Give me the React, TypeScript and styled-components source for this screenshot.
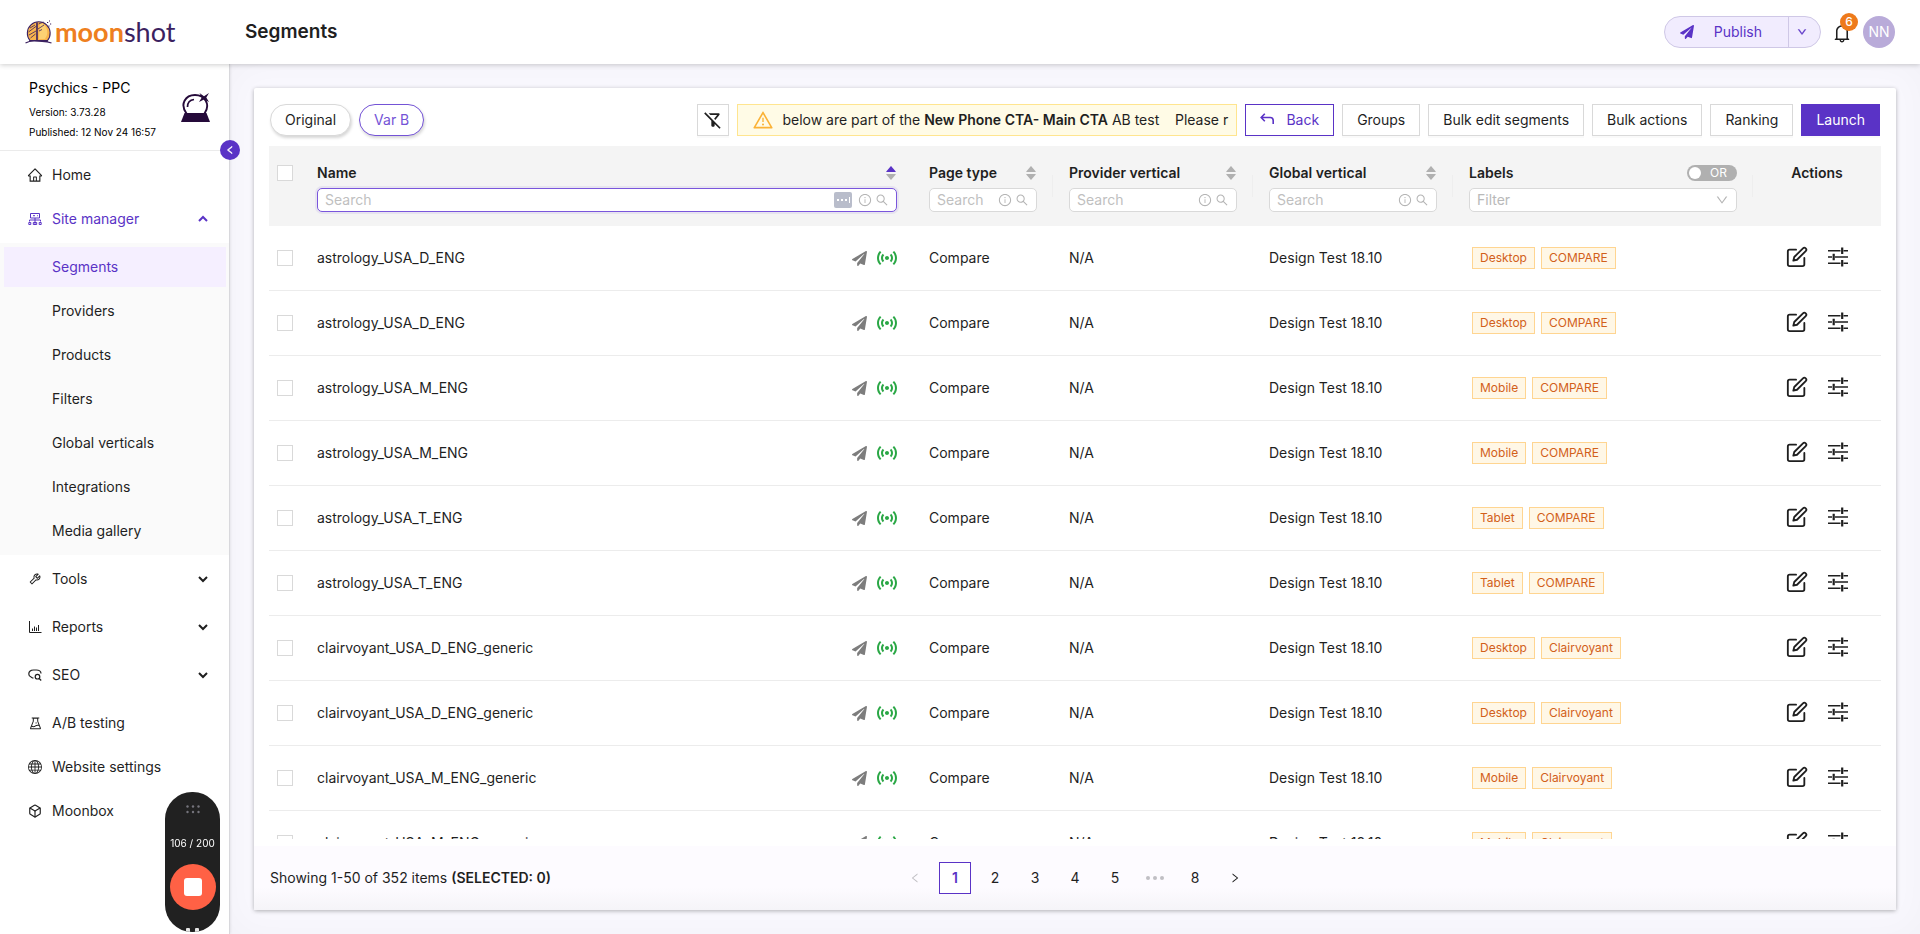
import React from "react";
import styled, { createGlobalStyle, css } from "styled-components";
import {
  AiOutlineBell,
  AiOutlineDown,
  AiOutlineExperiment,
  AiOutlineHome,
  AiOutlineInfoCircle,
  AiOutlineLeft,
  AiOutlineRight,
  AiOutlineSearch,
  AiOutlineTool,
  AiOutlineWarning,
  AiFillCaretDown,
  AiFillCaretUp,
} from "react-icons/ai";
import { BsGlobe } from "react-icons/bs";
import { FaPaperPlane } from "react-icons/fa";
import { FiBox, FiEdit } from "react-icons/fi";
import { MdOutlineFilterAltOff, MdSensors } from "react-icons/md";

const PURPLE = "#5a33c6";
const INK = "#1f1f1f";
const LINE = "#d9d9d9";

const GlobalStyle = createGlobalStyle`
  *, *::before, *::after { box-sizing: border-box; }
  body {
    margin: 0;
    font-family: Inter, "Liberation Sans", sans-serif;
    font-size: 14px;
    line-height: 22px;
    color: ${INK};
    background: #fff;
  }
  button, input, select { font: inherit; color: inherit; margin: 0; }
  button { cursor: pointer; }
  a { color: inherit; text-decoration: none; }
  svg { display: block; flex: none; }
`;

const Page = styled.div`
  display: flex;
  flex-direction: column;
  height: 100vh;
`;

/* ---------- top bar ---------- */

const TopBar = styled.header`
  position: relative;
  z-index: 2;
  display: flex;
  align-items: center;
  flex: none;
  height: 64px;
  padding: 0 25px 0 25px;
  background: #fff;
  box-shadow: 0 1px 5px rgba(0, 0, 0, 0.2);
`;

const Logo = styled.a`
  display: flex;
  align-items: center;
  gap: 3px;
  width: 220px;
`;

const Wordmark = styled.span`
  font-family: Lato, "Open Sans", sans-serif;
  font-size: 27px;
  line-height: 32px;
  font-weight: 700;
  color: #ee7f20;
  span {
    font-weight: 400;
    color: #3b2160;
  }
`;

const PageTitle = styled.h1`
  flex: 1;
  margin: 0;
  font-size: 19px;
  line-height: 28px;
  font-weight: 600;
`;

const PublishGroup = styled.div`
  display: flex;
  height: 32px;
  border: 1px solid #cfc8e6;
  border-radius: 16px;
  background: #f1ecfe;
  color: ${PURPLE};
  overflow: hidden;
`;

const PublishButton = styled.button`
  display: flex;
  align-items: center;
  gap: 20px;
  padding: 0 26px 0 15px;
  border: 0;
  background: none;
`;

const PublishMore = styled.button`
  display: flex;
  align-items: center;
  justify-content: center;
  width: 32px;
  padding: 0 5px 0 0;
  border: 0;
  border-left: 1px solid #cfc8e6;
  background: none;
`;

const BellButton = styled.button`
  position: relative;
  margin: 2px 10px 0;
  padding: 0;
  border: 0;
  background: none;
`;

const BellCount = styled.span`
  position: absolute;
  top: -9px;
  right: -5px;
  width: 18px;
  height: 18px;
  border-radius: 9px;
  background: #ee7a1b;
  color: #fff;
  font-size: 12px;
  line-height: 18px;
  font-weight: 500;
  text-align: center;
`;

const Avatar = styled.button`
  width: 32px;
  height: 32px;
  padding: 0;
  border: 0;
  border-radius: 50%;
  background: #b9abd9;
  color: #fff;
`;

/* ---------- side bar ---------- */

const Body = styled.div`
  display: flex;
  flex: 1;
  min-height: 0;
`;

const Sidebar = styled.aside`
  position: relative;
  z-index: 1;
  flex: none;
  width: 230px;
  background: #fff;
  border-right: 1px solid #d8d8dc;
  box-shadow: 0 0 3px rgba(0, 0, 0, 0.12);
`;

const SiteCard = styled.div`
  display: flex;
  justify-content: space-between;
  padding: 12px 19px 8px 29px;
  border-bottom: 1px solid #ebebeb;
  color: #000;
`;

const SiteName = styled.p`
  margin: 0 0 2px;
  line-height: 24px;
`;

const SiteMeta = styled.p`
  margin: 0;
  font-size: 10px;
  line-height: 20px;
  white-space: nowrap;
`;

const SiteIcon = styled.svg`
  margin-top: 16px;
`;

const CollapseButton = styled.button`
  position: absolute;
  top: 76px;
  right: -11px;
  display: flex;
  align-items: center;
  justify-content: center;
  width: 20px;
  height: 20px;
  padding: 0;
  border: 0;
  border-radius: 50%;
  background: ${PURPLE};
  color: #fff;
`;

const Nav = styled.nav`
  display: flex;
  flex-direction: column;
  padding-top: 4px;
`;

const NavGroup = styled.div<{ $sub?: boolean; $gap?: number; $first?: boolean }>`
  display: flex;
  flex-direction: column;
  gap: ${(p) => p.$gap ?? 4}px;
  padding: ${(p) => (p.$first ? 0 : 4)}px 3px 4px 4px;
  background: ${(p) => (p.$sub ? "#fafafa" : "none")};
`;

const NavItem = styled.a<{ $sub?: boolean; $active?: boolean; $open?: boolean }>`
  display: flex;
  align-items: center;
  gap: 10px;
  height: 40px;
  padding: 0 18px 0 ${(p) => (p.$sub ? 48 : 24)}px;
  background: ${(p) => (p.$active ? "#f5efff" : "none")};
  color: ${(p) => (p.$active || p.$open ? PURPLE : INK)};
`;

const NavIcon = styled.span`
  display: flex;
  align-items: center;
  justify-content: center;
  flex: none;
  width: 14px;
`;

const NavLabel = styled.span`
  flex: 1;
`;

/* ---------- content ---------- */

const Main = styled.main`
  display: flex;
  flex: 1;
  min-width: 0;
  padding: 24px;
  background: #f9f8fe;
  box-shadow: inset 0 0 40px rgba(0, 0, 0, 0.03);
`;

const Card = styled.section`
  display: flex;
  flex: 1;
  flex-direction: column;
  min-width: 0;
  border-radius: 2px;
  background: #fff;
  box-shadow: 0 1px 4px rgba(0, 0, 0, 0.3);
`;

const Toolbar = styled.div`
  display: flex;
  justify-content: space-between;
  gap: 16px;
  padding: 16px 16px 10px;
`;

const ToolGroup = styled.div`
  display: flex;
  gap: 8px;
  min-width: 0;
`;

const Pill = styled.button<{ $active?: boolean }>`
  height: 32px;
  padding: 0 14px;
  border: 1px solid ${(p) => (p.$active ? "#7453d6" : LINE)};
  border-radius: 16px;
  background: #fff;
  color: ${(p) => (p.$active ? "#7453d6" : INK)};
  box-shadow: 1px 2px 3px rgba(0, 0, 0, 0.16);
  white-space: nowrap;
`;

const ToolButton = styled.button<{ $kind?: "outline" | "solid"; $square?: boolean }>`
  display: flex;
  align-items: center;
  justify-content: center;
  gap: 12px;
  flex: none;
  height: 32px;
  ${(p) => (p.$square ? "width: 32px; padding: 0;" : "padding: 0 14px;")}
  border: 1px solid ${LINE};
  background: #fff;
  box-shadow: 0 2px 0 rgba(0, 0, 0, 0.02);
  white-space: nowrap;
  ${(p) => p.$kind === "outline" && css`border-color: ${PURPLE}; color: ${PURPLE};`}
  ${(p) => p.$kind === "solid" && css`border-color: ${PURPLE}; background: ${PURPLE}; color: #fff;`}
`;

const Notice = styled.div`
  display: flex;
  align-items: center;
  gap: 8px;
  width: 500px;
  min-width: 0;
  padding: 0 6px 0 14px;
  border: 1px solid #ffe58f;
  background: #fffbe6;
  > svg {
    color: #fbb236;
  }
`;

const NoticeText = styled.p`
  flex: 1;
  min-width: 0;
  margin: 0;
  overflow: hidden;
  white-space: pre;
  b {
    font-weight: 600;
  }
`;

const TableArea = styled.div`
  flex: 1;
  min-height: 0;
  margin: 0 15px 7px;
  overflow: hidden;
`;

const Table = styled.table`
  width: 100%;
  table-layout: fixed;
  border-collapse: separate;
  border-spacing: 0;
  text-align: left;
`;

const Col = styled.col<{ $width?: number }>`
  width: ${(p) => (p.$width ? `${p.$width}px` : "auto")};
`;

const Th = styled.th<{ $divider?: boolean; $center?: boolean }>`
  position: relative;
  height: 80px;
  padding: 16px 16px 14px;
  background: #f4f4f4;
  font-weight: 600;
  vertical-align: top;
  text-align: ${(p) => (p.$center ? "center" : "left")};
  ${(p) =>
    p.$divider &&
    css`
      &::after {
        content: "";
        position: absolute;
        top: 29px;
        right: 0;
        width: 1px;
        height: 22px;
        background: #eeeeee;
      }
    `}
`;

const ThTitle = styled.div`
  display: flex;
  align-items: center;
  justify-content: space-between;
  height: 22px;
  margin-bottom: 4px;
  white-space: nowrap;
`;

const SortButton = styled.button<{ $asc?: boolean }>`
  display: flex;
  flex-direction: column;
  margin-right: -1px;
  padding: 0;
  border: 0;
  background: none;
  color: #b0b0b0;
  svg + svg {
    margin-top: -6px;
  }
  svg:first-child {
    color: ${(p) => (p.$asc ? PURPLE : "#b0b0b0")};
  }
`;

const Field = styled.label<{ $focus?: boolean }>`
  display: flex;
  align-items: center;
  gap: 3px;
  height: 24px;
  padding: 0 7px;
  border: 1px solid ${(p) => (p.$focus ? "#7a56dc" : LINE)};
  border-radius: 5px;
  background: #fff;
  color: #b4b4b4;
  font-weight: 400;
  box-shadow: ${(p) => (p.$focus ? "0 0 0 2px rgba(90, 51, 198, 0.08)" : "none")};
  input,
  select {
    flex: 1;
    width: 0;
    min-width: 0;
    padding: 0;
    border: 0;
    outline: 0;
    background: none;
    appearance: none;
    color: #b9b9b9;
  }
  input::placeholder {
    color: #bfbfbf;
    opacity: 1;
  }
`;

const Autofill = styled.svg`
  margin-right: 3px;
`;

const Switch = styled.label`
  display: flex;
  align-items: center;
  gap: 9px;
  width: 50px;
  height: 16px;
  padding: 0 2px;
  border-radius: 8px;
  background: #b0b0b0;
  color: #fff;
  font-size: 12px;
  line-height: 16px;
  font-weight: 400;
  input {
    width: 12px;
    height: 12px;
    border-radius: 50%;
    background: #fff;
    appearance: none;
  }
`;

const Td = styled.td`
  height: 65px;
  padding: 0 16px;
  border-bottom: 1px solid #ececec;
`;

const Checkbox = styled.input.attrs({ type: "checkbox" })`
  display: block;
  width: 16px;
  height: 16px;
  border: 1px solid ${LINE};
  background: #fff;
  appearance: none;
`;

const CheckTh = styled(Th)`
  padding: 19px 8px;
`;

const CheckTd = styled(Td)`
  padding: 0 8px;
`;

const NameCell = styled.div`
  display: flex;
  align-items: center;
  justify-content: space-between;
`;

const States = styled.span`
  display: flex;
  align-items: center;
  gap: 8px;
  margin-right: -2px;
  color: #7d7d7d;
  svg + svg {
    color: #2aa745;
  }
`;

const Tags = styled.div`
  display: flex;
  gap: 6px;
  padding-left: 3px;
`;

const Tag = styled.span`
  padding: 0 7px;
  border: 1px solid #ffd591;
  background: #fff7e6;
  color: #d2601a;
  font-size: 12px;
  line-height: 20px;
`;

const Actions = styled.div`
  display: flex;
  align-items: center;
  justify-content: center;
  gap: 20px;
  padding-bottom: 2px;
`;

const IconButton = styled.button`
  padding: 0;
  border: 0;
  background: none;
`;

const Footer = styled.footer`
  display: grid;
  grid-template-columns: 1fr auto 1fr;
  align-items: center;
  flex: none;
  height: 64px;
  padding: 0 16px;
  background: linear-gradient(#fdfbff 65%, #f5f4f8);
  b {
    font-weight: 600;
  }
`;

const Pager = styled.nav`
  display: flex;
  gap: 8px;
`;

const PageButton = styled.button<{ $current?: boolean; $muted?: boolean }>`
  display: flex;
  align-items: center;
  justify-content: center;
  width: 32px;
  height: 32px;
  padding: 0;
  border: 1px solid ${(p) => (p.$current ? PURPLE : "transparent")};
  background: ${(p) => (p.$current ? "#fff" : "none")};
  color: ${(p) => (p.$current ? PURPLE : p.$muted ? "#c0bfc4" : INK)};
  font-weight: ${(p) => (p.$current ? 600 : 400)};
`;

/* ---------- floating recorder ---------- */

const Recorder = styled.div`
  position: fixed;
  left: 165px;
  bottom: 2px;
  z-index: 5;
  display: flex;
  flex-direction: column;
  align-items: center;
  width: 55px;
  height: 140px;
  padding-top: 13px;
  border-radius: 27px;
  background: #212121;
  color: #fff;
  white-space: nowrap;
  overflow: hidden;
`;

const RecorderCount = styled.span`
  margin: 21px 0 13px;
  font-size: 10px;
  line-height: 16px;
`;

const StopButton = styled.button`
  display: flex;
  align-items: center;
  justify-content: center;
  width: 46px;
  height: 46px;
  margin-bottom: 18px;
  padding: 0;
  border: 0;
  border-radius: 50%;
  background: #ff6145;
`;

/* ---------- drawings ---------- */

const MoonLogo = () => (
  <svg width="27" height="24" viewBox="0 0 27 24" fill="none">
    <path d="M5 20.500A11.400 11.400 0 1 1 22.500 20.500Z" fill="#f9b44c" stroke="#3b2160" strokeWidth="1.100" />
    <path d="M15 3c6 1 8 7 7 12l-2 4h-6z" fill="#fdd173" />
    <path d="M12 2.500v18" stroke="#3b2160" strokeWidth="1.600" />
    <path d="M13.500 4l5-2M3.500 12l8-6M4 15l7-4M5 8l5-3M13 9l6-4M14 11l3-1.500M5.500 18l5-4" stroke="#3b2160" strokeWidth=".8" />
    <path d="M.5 23c4-2.500 8-2.300 12.500-1.800S21 20.700 26.500 23M4 20.800h19" stroke="#3b2160" strokeWidth="1.100" />
    <path d="M22 2.500h1.200M24 1h1M25 4h1.200M23.500 6h1" stroke="#3b2160" strokeWidth="1" />
  </svg>
);

const CrystalBall = () => (
  <SiteIcon width="29" height="31" viewBox="0 0 29 31" fill="none">
    <path d="M5.500 21.500C-1.500 12 4.500 3 14 3s16 9 9.500 18.500" stroke="#250a3a" strokeWidth="1.900" />
    <path d="M6.500 15c0-4 2.500-7 6.500-7.500" stroke="#250a3a" strokeWidth="1.700" />
    <path d="M3.500 21h22L29 30H0z" fill="#250a3a" />
    <path d="M18.500 1l4.500 3.200L28 1l-2.700 4.500L28 10l-5-2.600L18 10l2.800-4.500z" fill="#250a3a" />
  </SiteIcon>
);

const SiteManagerIcon = () => (
  <svg width="14" height="14" viewBox="0 0 14 14" fill="none" stroke="currentColor">
    <path d="M2.500 1.500h9v4.500h-9zM7 6v7M1.500 9.500V8h11v1.500M5 3.700h2M9 3.700h.8" />
    <path d="M.8 10.500h2v2h-2zM11.200 10.500h2v2h-2zM5.300 10.500h3.400v2H5.300z" />
  </svg>
);

const ChartIcon = () => (
  <svg width="14" height="14" viewBox="0 0 14 14" fill="none" stroke="currentColor">
    <path d="M1.500 1v11.500H13.500M4.500 11V8.500M6.500 11V6.500M8.500 11V7.500M10.500 11V5" />
  </svg>
);

const SeoIcon = () => (
  <svg width="14" height="14" viewBox="0 0 14 14" fill="none" stroke="currentColor" strokeWidth="1.200">
    <path d="M5.500 10H4.500L3 9C1.500 8.500.8 7.500.8 6 .8 3.500 3 2 5.500 2h3C11 2 13 3.500 13 5.500" />
    <circle cx="9.500" cy="8.700" r="2.300" />
    <path d="M11.200 10.500l2 2" />
  </svg>
);

const Chevron = ({ up }: { up?: boolean }) => (
  <svg width="10" height="10" viewBox="0 0 10 10" fill="none" stroke="currentColor" strokeWidth="2">
    <path d={up ? "M1 7l4-4 4 4" : "M1 3l4 4 4-4"} />
  </svg>
);

const SlidersIcon = () => (
  <svg width="20" height="20" viewBox="0 0 20 20" fill="none" stroke="currentColor">
    <path d="M0 3.700h12.500M15.500 3.700H20M0 10h4M7 10h13M0 16.300h12.500M15.500 16.300H20" strokeWidth="1.600" />
    <path d="M14.200.5v6.400M5.700 6.800v6.400M14.200 13.100v6.400" strokeWidth="2.200" />
  </svg>
);

const BackIcon = () => (
  <svg width="14" height="14" viewBox="0 0 14 14" fill="none" stroke="currentColor" strokeWidth="1.600">
    <path d="M4.800.8L1.200 4.500l3.600 3.700M1.200 4.500h9c2 0 3 1 3 3V11" />
  </svg>
);

const AutofillIcon = () => (
  <Autofill width="18" height="16" viewBox="0 0 18 16">
    <rect width="18" height="16" rx="2" fill="#b9bdcb" />
    <path d="M3 7h2v2H3zM7 7h2v2H7zM11 7h2v2h-2zM15 5h1v6h-1z" fill="#fff" />
  </Autofill>
);

const Grip = () => (
  <svg width="14" height="9" viewBox="0 0 14 9" fill="#75747c">
    {[1.5, 7, 12.5].map((x) => (
      <React.Fragment key={x}>
        <circle cx={x} cy="1.500" r="1.200" />
        <circle cx={x} cy="7" r="1.200" />
      </React.Fragment>
    ))}
  </svg>
);

/* ---------- data ---------- */

const siteLinks = ["Segments", "Providers", "Products", "Filters", "Global verticals", "Integrations", "Media gallery"];

const foldedMenus = [
  { label: "Tools", icon: <AiOutlineTool size={14} /> },
  { label: "Reports", icon: <ChartIcon /> },
  { label: "SEO", icon: <SeoIcon /> },
];

const plainLinks = [
  { label: "A/B testing", icon: <AiOutlineExperiment size={15} /> },
  { label: "Website settings", icon: <BsGlobe size={14} /> },
  { label: "Moonbox", icon: <FiBox size={14} /> },
];

const columnWidths = [32, undefined, 140, 200, 200, 300, 128];

const rows: [string, string, string][] = [
  ["astrology_USA_D_ENG", "Desktop", "COMPARE"],
  ["astrology_USA_D_ENG", "Desktop", "COMPARE"],
  ["astrology_USA_M_ENG", "Mobile", "COMPARE"],
  ["astrology_USA_M_ENG", "Mobile", "COMPARE"],
  ["astrology_USA_T_ENG", "Tablet", "COMPARE"],
  ["astrology_USA_T_ENG", "Tablet", "COMPARE"],
  ["clairvoyant_USA_D_ENG_generic", "Desktop", "Clairvoyant"],
  ["clairvoyant_USA_D_ENG_generic", "Desktop", "Clairvoyant"],
  ["clairvoyant_USA_M_ENG_generic", "Mobile", "Clairvoyant"],
  ["clairvoyant_USA_M_ENG_generic", "Mobile", "Clairvoyant"],
];

const SearchColumn = ({ title, active }: { title: string; active?: boolean }) => (
  <Th $divider={!active} scope="col">
    <ThTitle>
      {title}
      <SortButton $asc={active} aria-label={`Sort by ${title}`}>
        <AiFillCaretUp size={14} />
        <AiFillCaretDown size={14} />
      </SortButton>
    </ThTitle>
    <Field $focus={active}>
      <input placeholder="Search" aria-label={`Search ${title}`} />
      {active && <AutofillIcon />}
      <AiOutlineInfoCircle size={14} />
      <AiOutlineSearch size={14} />
    </Field>
  </Th>
);

export default function App() {
  return (
    <Page>
      <GlobalStyle />
      <TopBar>
        <Logo href="#">
          <MoonLogo />
          <Wordmark>
            moon<span>shot</span>
          </Wordmark>
        </Logo>
        <PageTitle>Segments</PageTitle>
        <PublishGroup>
          <PublishButton>
            <FaPaperPlane size={14} />
            Publish
          </PublishButton>
          <PublishMore aria-label="More publish options">
            <AiOutlineDown size={10} strokeWidth={60} stroke="currentColor" />
          </PublishMore>
        </PublishGroup>
        <BellButton aria-label="Notifications">
          <AiOutlineBell size={22} />
          <BellCount>6</BellCount>
        </BellButton>
        <Avatar>NN</Avatar>
      </TopBar>

      <Body>
        <Sidebar>
          <SiteCard>
            <div>
              <SiteName>Psychics - PPC</SiteName>
              <SiteMeta>Version: 3.73.28</SiteMeta>
              <SiteMeta>Published: 12 Nov 24 16:57</SiteMeta>
            </div>
            <CrystalBall />
          </SiteCard>
          <CollapseButton aria-label="Collapse menu">
            <AiOutlineLeft size={10} strokeWidth={60} stroke="currentColor" />
          </CollapseButton>
          <Nav>
            <NavGroup $first>
              <NavItem href="#">
                <NavIcon>
                  <AiOutlineHome size={16} />
                </NavIcon>
                <NavLabel>Home</NavLabel>
              </NavItem>
              <NavItem href="#" $open>
                <NavIcon>
                  <SiteManagerIcon />
                </NavIcon>
                <NavLabel>Site manager</NavLabel>
                <Chevron up />
              </NavItem>
            </NavGroup>
            <NavGroup $sub>
              {siteLinks.map((label, i) => (
                <NavItem key={label} href="#" $sub $active={i === 0}>
                  {label}
                </NavItem>
              ))}
            </NavGroup>
            <NavGroup $gap={8}>
              {foldedMenus.map(({ label, icon }) => (
                <NavItem key={label} href="#">
                  <NavIcon>{icon}</NavIcon>
                  <NavLabel>{label}</NavLabel>
                  <Chevron />
                </NavItem>
              ))}
            </NavGroup>
            <NavGroup>
              {plainLinks.map(({ label, icon }) => (
                <NavItem key={label} href="#">
                  <NavIcon>{icon}</NavIcon>
                  <NavLabel>{label}</NavLabel>
                </NavItem>
              ))}
            </NavGroup>
          </Nav>
        </Sidebar>

        <Main>
          <Card>
            <Toolbar>
              <ToolGroup>
                <Pill>Original</Pill>
                <Pill $active>Var B</Pill>
              </ToolGroup>
              <ToolGroup>
                <ToolButton $square aria-label="Clear filters">
                  <MdOutlineFilterAltOff size={20} />
                </ToolButton>
                <Notice role="alert">
                  <AiOutlineWarning size={22} />
                  <NoticeText>
                    below are part of the <b>New Phone CTA- Main CTA</b> AB test{"    "}Please r
                  </NoticeText>
                </Notice>
                <ToolButton $kind="outline">
                  <BackIcon />
                  Back
                </ToolButton>
                <ToolButton>Groups</ToolButton>
                <ToolButton>Bulk edit segments</ToolButton>
                <ToolButton>Bulk actions</ToolButton>
                <ToolButton>Ranking</ToolButton>
                <ToolButton $kind="solid">Launch</ToolButton>
              </ToolGroup>
            </Toolbar>

            <TableArea>
              <Table>
                <colgroup>
                  {columnWidths.map((width, i) => (
                    <Col key={i} $width={width} />
                  ))}
                </colgroup>
                <thead>
                  <tr>
                    <CheckTh scope="col">
                      <Checkbox aria-label="Select all" />
                    </CheckTh>
                    <SearchColumn title="Name" active />
                    <SearchColumn title="Page type" />
                    <SearchColumn title="Provider vertical" />
                    <SearchColumn title="Global vertical" />
                    <Th $divider scope="col">
                      <ThTitle>
                        Labels
                        <Switch>
                          <input type="checkbox" role="switch" aria-label="Match any label" />
                          OR
                        </Switch>
                      </ThTitle>
                      <Field>
                        <select aria-label="Filter labels">
                          <option>Filter</option>
                        </select>
                        <AiOutlineDown size={14} />
                      </Field>
                    </Th>
                    <Th $center scope="col">
                      Actions
                    </Th>
                  </tr>
                </thead>
                <tbody>
                  {rows.map(([name, device, label], i) => (
                    <tr key={i}>
                      <CheckTd>
                        <Checkbox aria-label={`Select ${name}`} />
                      </CheckTd>
                      <Td>
                        <NameCell>
                          {name}
                          <States>
                            <FaPaperPlane size={15} />
                            <MdSensors size={24} />
                          </States>
                        </NameCell>
                      </Td>
                      <Td>Compare</Td>
                      <Td>N/A</Td>
                      <Td>Design Test 18.10</Td>
                      <Td>
                        <Tags>
                          <Tag>{device}</Tag>
                          <Tag>{label}</Tag>
                        </Tags>
                      </Td>
                      <Td>
                        <Actions>
                          <IconButton aria-label="Edit">
                            <FiEdit size={22} />
                          </IconButton>
                          <IconButton aria-label="Settings">
                            <SlidersIcon />
                          </IconButton>
                        </Actions>
                      </Td>
                    </tr>
                  ))}
                </tbody>
              </Table>
            </TableArea>

            <Footer>
              <span>
                Showing 1-50 of 352 items <b>(SELECTED: 0)</b>
              </span>
              <Pager aria-label="Pages">
                <PageButton $muted aria-label="Previous page">
                  <AiOutlineLeft size={12} />
                </PageButton>
                <PageButton $current>1</PageButton>
                <PageButton>2</PageButton>
                <PageButton>3</PageButton>
                <PageButton>4</PageButton>
                <PageButton>5</PageButton>
                <PageButton $muted aria-label="Next five pages">
                  <svg width="18" height="4" viewBox="0 0 18 4" fill="currentColor">
                    <circle cx="2" cy="2" r="2" />
                    <circle cx="9" cy="2" r="2" />
                    <circle cx="16" cy="2" r="2" />
                  </svg>
                </PageButton>
                <PageButton>8</PageButton>
                <PageButton aria-label="Next page">
                  <AiOutlineRight size={12} />
                </PageButton>
              </Pager>
            </Footer>
          </Card>
        </Main>
      </Body>

      <Recorder>
        <Grip />
        <RecorderCount>106 / 200</RecorderCount>
        <StopButton aria-label="Stop recording">
          <svg width="18" height="18" viewBox="0 0 18 18">
            <rect width="18" height="18" rx="3" fill="#fff" />
          </svg>
        </StopButton>
        <svg width="13" height="4" viewBox="0 0 13 4" fill="#e6e6e6">
          <path d="M0 4V1.500a2 2 0 0 1 4 0V4zM9 4V1.500a2 2 0 0 1 4 0V4z" />
        </svg>
      </Recorder>
    </Page>
  );
}
